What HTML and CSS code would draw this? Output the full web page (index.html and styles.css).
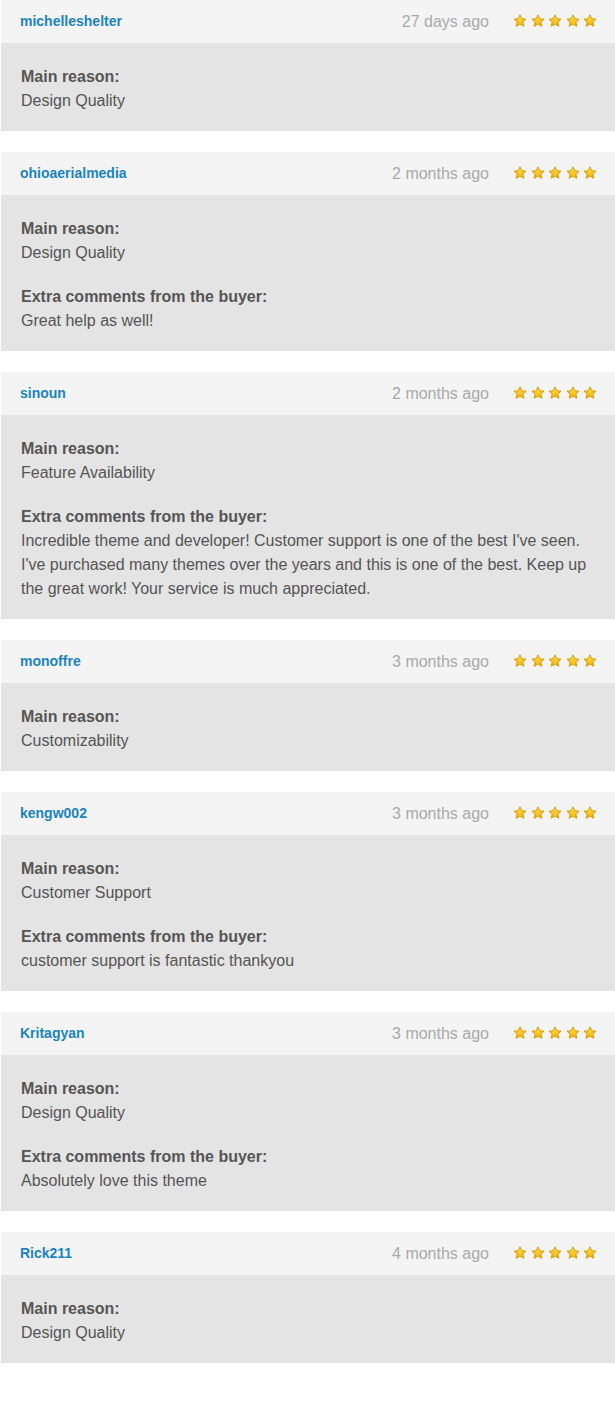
FILE: index.html
```html
<!DOCTYPE html>
<html>
<head>
<meta charset="utf-8">
<link rel="stylesheet" href="styles.css">
</head>
<body>
<svg width="0" height="0" class="defs">
  <defs>
    <linearGradient id="sg" x1="0" y1="0" x2="0" y2="1">
      <stop offset="0" stop-color="#ffe15a"/>
      <stop offset="1" stop-color="#f5b400"/>
    </linearGradient>
    <symbol id="star" viewBox="0 0 14 14">
      <path d="M7 0.9 L8.8 4.8 L13 5.2 L9.8 8 L10.8 12.3 L7 10 L3.2 12.3 L4.2 8 L1 5.2 L5.2 4.8 Z" fill="url(#sg)" stroke="#d99a00" stroke-width="1" stroke-linejoin="round"/>
    </symbol>
  </defs>
</svg>
<div class="reviews">

  <div class="review">
    <div class="review-head">
      <a class="user">michelleshelter</a>
      <span class="date">27 days ago</span>
      <span class="stars"><svg><use href="#star"/></svg><svg><use href="#star"/></svg><svg><use href="#star"/></svg><svg><use href="#star"/></svg><svg><use href="#star"/></svg></span>
    </div>
    <div class="review-body">
      <div class="block"><div class="label">Main reason:</div><div class="text">Design Quality</div></div>
    </div>
  </div>

  <div class="review">
    <div class="review-head">
      <a class="user">ohioaerialmedia</a>
      <span class="date">2 months ago</span>
      <span class="stars"><svg><use href="#star"/></svg><svg><use href="#star"/></svg><svg><use href="#star"/></svg><svg><use href="#star"/></svg><svg><use href="#star"/></svg></span>
    </div>
    <div class="review-body">
      <div class="block"><div class="label">Main reason:</div><div class="text">Design Quality</div></div>
      <div class="block"><div class="label">Extra comments from the buyer:</div><div class="text">Great help as well!</div></div>
    </div>
  </div>

  <div class="review">
    <div class="review-head">
      <a class="user">sinoun</a>
      <span class="date">2 months ago</span>
      <span class="stars"><svg><use href="#star"/></svg><svg><use href="#star"/></svg><svg><use href="#star"/></svg><svg><use href="#star"/></svg><svg><use href="#star"/></svg></span>
    </div>
    <div class="review-body">
      <div class="block"><div class="label">Main reason:</div><div class="text">Feature Availability</div></div>
      <div class="block"><div class="label">Extra comments from the buyer:</div><div class="text">Incredible theme and developer! Customer support is one of the best I've seen. I've purchased many themes over the years and this is one of the best. Keep up the great work! Your service is much appreciated.</div></div>
    </div>
  </div>

  <div class="review">
    <div class="review-head">
      <a class="user">monoffre</a>
      <span class="date">3 months ago</span>
      <span class="stars"><svg><use href="#star"/></svg><svg><use href="#star"/></svg><svg><use href="#star"/></svg><svg><use href="#star"/></svg><svg><use href="#star"/></svg></span>
    </div>
    <div class="review-body">
      <div class="block"><div class="label">Main reason:</div><div class="text">Customizability</div></div>
    </div>
  </div>

  <div class="review">
    <div class="review-head">
      <a class="user">kengw002</a>
      <span class="date">3 months ago</span>
      <span class="stars"><svg><use href="#star"/></svg><svg><use href="#star"/></svg><svg><use href="#star"/></svg><svg><use href="#star"/></svg><svg><use href="#star"/></svg></span>
    </div>
    <div class="review-body">
      <div class="block"><div class="label">Main reason:</div><div class="text">Customer Support</div></div>
      <div class="block"><div class="label">Extra comments from the buyer:</div><div class="text">customer support is fantastic thankyou</div></div>
    </div>
  </div>

  <div class="review">
    <div class="review-head">
      <a class="user">Kritagyan</a>
      <span class="date">3 months ago</span>
      <span class="stars"><svg><use href="#star"/></svg><svg><use href="#star"/></svg><svg><use href="#star"/></svg><svg><use href="#star"/></svg><svg><use href="#star"/></svg></span>
    </div>
    <div class="review-body">
      <div class="block"><div class="label">Main reason:</div><div class="text">Design Quality</div></div>
      <div class="block"><div class="label">Extra comments from the buyer:</div><div class="text">Absolutely love this theme</div></div>
    </div>
  </div>

  <div class="review">
    <div class="review-head">
      <a class="user">Rick211</a>
      <span class="date">4 months ago</span>
      <span class="stars"><svg><use href="#star"/></svg><svg><use href="#star"/></svg><svg><use href="#star"/></svg><svg><use href="#star"/></svg><svg><use href="#star"/></svg></span>
    </div>
    <div class="review-body">
      <div class="block"><div class="label">Main reason:</div><div class="text">Design Quality</div></div>
    </div>
  </div>

</div>
</body>
</html>
```

FILE: styles.css
```css
html, body {
  margin: 0;
  padding: 0;
  background: #ffffff;
  overflow-x: hidden;
}
body {
  font-family: "Liberation Sans", Arial, Helvetica, sans-serif;
  color: #555555;
}
.defs {
  position: absolute;
  width: 0;
  height: 0;
}
.reviews {
  display: flex;
  flex-direction: column;
  gap: 21px;
  margin-left: 1px;
}
.review {
  width: 614px;
}
.review-head {
  height: 43px;
  background: #f4f4f4;
  display: flex;
  align-items: center;
  padding: 0 18px 0 19px;
}
.user {
  font-size: 14px;
  font-weight: bold;
  color: #1a84bd;
  flex: 1;
  margin-top: -1px;
}
.date {
  font-size: 16px;
  color: #a9a9a9;
  margin-right: 24px;
}
.stars {
  display: flex;
  gap: 3.5px;
  margin-top: -1px;
}
.stars svg {
  width: 14px;
  height: 14px;
  display: block;
}
.review-body {
  background: #e4e4e4;
  padding: 22px 20px 18px 20px;
  display: flex;
  flex-direction: column;
  gap: 20px;
  font-size: 16px;
  line-height: 24px;
}
.label {
  font-weight: bold;
  color: #555555;
}
.text {
  color: #555555;
  padding-right: 6px;
}
```
